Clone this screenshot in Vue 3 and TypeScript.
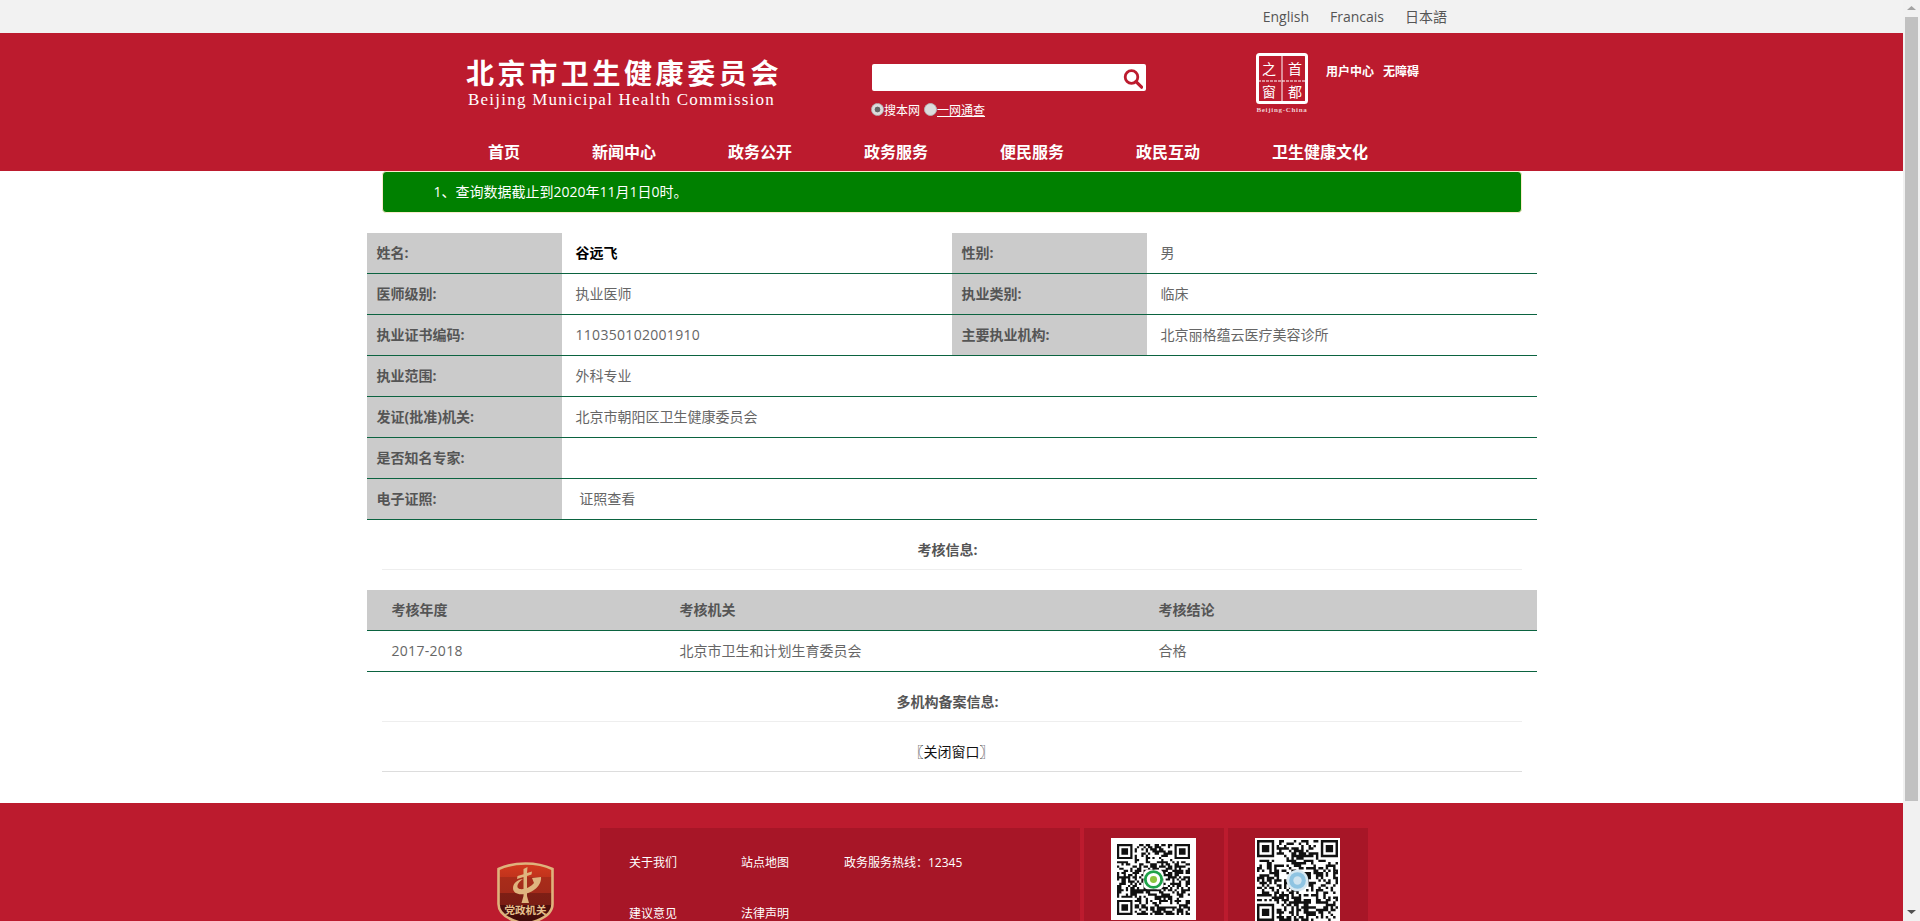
<template>
  <div class="window">
    <div class="page">
      <div class="topbar">
        <a v-for="lang in langs" :key="lang" class="lang">{{ lang }}</a>
      </div>

      <header class="header">
        <div class="head-main">
          <div class="brand">
            <div class="brand-cn">北京市卫生健康委员会</div>
            <div class="brand-en">Beijing Municipal Health Commission</div>
          </div>
          <div class="search-box">
            <div class="search">
              <svg class="search-icon" viewBox="0 0 20 20" width="20" height="20">
                <circle cx="8.5" cy="8" r="6.3" fill="none" stroke="#bc1b2e" stroke-width="2.8" />
                <path d="M13 12.6 L18.6 18.2" stroke="#bc1b2e" stroke-width="3.2" stroke-linecap="round" />
              </svg>
            </div>
            <div class="scope">
              <input class="radio" type="radio" name="scope" checked />
              <span>搜本网</span>
              <input class="radio second" type="radio" name="scope" />
              <a class="scope-link">一网通查</a>
            </div>
          </div>
          <div class="capital">
            <svg viewBox="0 0 58 61" width="58" height="61">
              <rect x="2.5" y="1.5" width="49" height="48" rx="2" fill="none" stroke="#fff" stroke-width="3" />
              <path d="M27 2 V49" stroke="#fff" stroke-width="1" />
              <path d="M3 28 H51" stroke="#fff" stroke-width="1.2" stroke-dasharray="3 1" />
              <text x="14" y="21" class="cap-char">之</text>
              <text x="40" y="21" class="cap-char">首</text>
              <text x="14" y="44" class="cap-char">窗</text>
              <text x="40" y="44" class="cap-char">都</text>
              <text x="27" y="59" class="cap-en">Beijing-China</text>
            </svg>
          </div>
          <div class="user-links">
            <a>用户中心</a>
            <a>无障碍</a>
          </div>
        </div>
        <nav class="nav">
          <a v-for="item in navItems" :key="item" class="nav-item">{{ item }}</a>
        </nav>
      </header>

      <main class="container">
        <div class="notice">1、查询数据截止到2020年11月1日0时。</div>

        <table class="info">
          <colgroup>
            <col class="c-label" />
            <col class="c-value" />
            <col class="c-label" />
            <col class="c-value" />
          </colgroup>
          <tbody>
            <tr v-for="row in infoRows" :key="row.label">
              <th>{{ row.label }}</th>
              <td :colspan="row.label2 ? 1 : 3" :class="{ strong: row.strong, num: row.num }">{{ row.value }}</td>
              <template v-if="row.label2">
                <th>{{ row.label2 }}</th>
                <td>{{ row.value2 }}</td>
              </template>
            </tr>
          </tbody>
        </table>

        <div class="section gap">考核信息:</div>

        <table class="review">
          <colgroup>
            <col class="r-1" />
            <col class="r-2" />
            <col class="r-3" />
          </colgroup>
          <thead>
            <tr>
              <th>考核年度</th>
              <th>考核机关</th>
              <th>考核结论</th>
            </tr>
          </thead>
          <tbody>
            <tr>
              <td class="num">2017-2018</td>
              <td>北京市卫生和计划生育委员会</td>
              <td>合格</td>
            </tr>
          </tbody>
        </table>

        <div class="section">多机构备案信息:</div>
        <div class="section close"><a>〖关闭窗口〗</a></div>
      </main>

      <footer class="footer">
        <div class="badge">
          <svg viewBox="0 0 57 63" width="57" height="63">
            <defs>
              <linearGradient id="shieldFill" x1="0" y1="0" x2="0" y2="1">
                <stop offset="0" stop-color="#d33a1f" />
                <stop offset="0.22" stop-color="#c2331c" />
                <stop offset="0.23" stop-color="#a92c1a" />
                <stop offset="0.48" stop-color="#a32a1a" />
                <stop offset="0.49" stop-color="#7e1f15" />
                <stop offset="0.68" stop-color="#7a1d14" />
                <stop offset="0.69" stop-color="#4f0f0d" />
                <stop offset="1" stop-color="#3d0a09" />
              </linearGradient>
            </defs>
            <path d="M1.5 7 C10 3 19 1.5 28.5 1.5 C38 1.5 47 3 55.5 7 V42 C55.5 53 42 59 28.5 62 C15 59 1.5 53 1.5 42 Z" fill="url(#shieldFill)" stroke="#dfb27c" stroke-width="2.6" />
            <g fill="#dfb47e">
              <path d="M26.5 7 L30.5 5 L30 11 L35 9.5 L34.5 12.5 L30 14 V34 L32 41 H24.5 L26.5 34 V15 L20 17 L20.5 14 L26.5 12.2 Z" />
              <path d="M16 26 C16 20 23 17 26 17 C21 20 19.5 24 21 26 C24 29 33 26 37 21 L35 16 L44 15 C45 23 36 31 27 32 C21 33 16 31 16 26 Z" />
            </g>
            <text x="28.5" y="52" class="badge-text">党政机关</text>
          </svg>
        </div>
        <div class="foot-links">
          <a>关于我们</a>
          <a>站点地图</a>
          <a>政务服务热线&#xFF1A;12345</a>
          <a>建议意见</a>
          <a>法律声明</a>
        </div>
        <div class="qr-panel">
          <div class="qr qr-one">
            <svg viewBox="0 0 33 33" width="73" height="71" preserveAspectRatio="none">
              <path :d="qrOne" fill="#111" />
              <rect x="12" y="12" width="9" height="9" rx="2" fill="#fff" />
              <circle cx="16.5" cy="16.5" r="3.7" fill="#fff" stroke="#1fa24a" stroke-width="1.3" />
              <circle cx="16.5" cy="16.5" r="1.6" fill="#8cc63f" />
            </svg>
          </div>
        </div>
        <div class="qr-panel">
          <div class="qr qr-two">
            <svg viewBox="0 0 33 33" width="81" height="81">
              <path :d="qrTwo" fill="#111" />
              <circle cx="16.5" cy="16.5" r="4.4" fill="#d8e9f2" />
              <circle cx="16.5" cy="16.5" r="3.4" fill="#8fc4e2" />
              <circle cx="16.5" cy="16.5" r="1.7" fill="#cfe3ef" />
            </svg>
          </div>
        </div>
      </footer>
    </div>

    <div class="scrollbar">
      <svg class="arrow" viewBox="0 0 17 17" width="17" height="17">
        <path d="M8.5 6 L13 10 H4 Z" fill="#a3a3a3" />
      </svg>
      <div class="thumb"></div>
      <svg class="arrow end" viewBox="0 0 17 17" width="17" height="17">
        <path d="M4 7 H13 L8.5 11 Z" fill="#505050" />
      </svg>
    </div>
  </div>
</template>

<script setup lang="ts">
type InfoRow = {
  label: string;
  value: string;
  label2?: string;
  value2?: string;
  strong?: boolean;
  num?: boolean;
};

const langs = ["English", "Francais", "日本語"];

const navItems = ["首页", "新闻中心", "政务公开", "政务服务", "便民服务", "政民互动", "卫生健康文化"];

const infoRows: InfoRow[] = [
  { label: "姓名:", value: "谷远飞", label2: "性别:", value2: "男", strong: true },
  { label: "医师级别:", value: "执业医师", label2: "执业类别:", value2: "临床" },
  { label: "执业证书编码:", value: "110350102001910", label2: "主要执业机构:", value2: "北京丽格蕴云医疗美容诊所", num: true },
  { label: "执业范围:", value: "外科专业" },
  { label: "发证(批准)机关:", value: "北京市朝阳区卫生健康委员会" },
  { label: "是否知名专家:", value: "" },
  { label: "电子证照:", value: "\u00a0证照查看" },
];

// fake but stable QR pattern, only has to look right
const qrPath = (seed: number): string => {
  const size = 33;
  let state = seed;
  const next = () => {
    state = (state * 1103515245 + 12345) & 0x7fffffff;
    return (state >> 16) & 1;
  };
  const inFinder = (x: number, y: number) =>
    (x < 8 && y < 8) || (x >= size - 8 && y < 8) || (x < 8 && y >= size - 8);
  let d = "";
  for (let y = 0; y < size; y++) {
    for (let x = 0; x < size; x++) {
      if (!inFinder(x, y) && next()) d += `M${x} ${y}h1v1h-1z`;
    }
  }
  for (const [fx, fy] of [[0, 0], [size - 7, 0], [0, size - 7]]) {
    d += `M${fx} ${fy}h7v7h-7zM${fx + 1} ${fy + 1}v5h5v-5zM${fx + 2} ${fy + 2}h3v3h-3z`;
  }
  return d;
};

const qrOne = qrPath(20201);
const qrTwo = qrPath(77123);
</script>

<style scoped>
.window {
  display: flex;
  height: 921px;
  overflow: hidden;
}

.page {
  flex: 0 0 1903px;
  width: 1903px;
  background: #fff;
  font-family: "Open Sans", "Noto Sans CJK SC", sans-serif;
  font-size: 14px;
  line-height: 20px;
  color: #666;
}

.scrollbar {
  display: flex;
  flex-direction: column;
  flex: 0 0 17px;
  background: #f1f1f1;
}

.arrow {
  display: block;
  flex: none;
}

.arrow.end {
  margin-top: auto;
  margin-bottom: 1px;
}

.thumb {
  flex: none;
  height: 784px;
  margin: 0 2px;
  background: #c1c1c1;
}

.topbar {
  display: flex;
  justify-content: flex-end;
  align-items: center;
  gap: 21px;
  height: 33px;
  padding-right: 456px;
  background: #f2f2f2;
  color: #555;
}

.header {
  height: 138px;
  background: #bc1b2e;
  color: #fff;
}

.head-main {
  display: flex;
  height: 99px;
  padding-left: 466px;
}

.brand {
  width: 406px;
  padding-top: 25px;
}

.brand-cn {
  font-size: 28px;
  line-height: 28px;
  font-weight: 700;
  letter-spacing: 3.6px;
  font-family: "Noto Sans CJK SC", sans-serif;
}

.brand-en {
  margin: 4px 0 0 2px;
  font-family: "Liberation Serif", serif;
  font-size: 17px;
  line-height: 20px;
  letter-spacing: 1.23px;
  white-space: nowrap;
}

.search-box {
  width: 274px;
  padding-top: 31px;
}

.search {
  position: relative;
  height: 27px;
  background: #fff;
  border-radius: 2px;
}

.search-icon {
  position: absolute;
  top: 5px;
  right: 3px;
}

.scope {
  display: flex;
  align-items: center;
  margin: 10px 0 0 -1px;
  height: 20px;
  font-size: 12px;
  color: #fff;
}

.radio {
  appearance: none;
  box-sizing: border-box;
  width: 13px;
  height: 13px;
  margin: -4px 0 0 0;
  border-radius: 50%;
  background: #dcdcdc;
  border: 1px solid #b5b5b5;
}

.radio:checked {
  background: radial-gradient(circle, #666 0 2.6px, #dcdcdc 3.2px);
}

.radio.second {
  margin-left: 4px;
}

.scope-link {
  text-decoration: underline;
}

.capital {
  width: 58px;
  margin: 20px 0 0 109px;
}

.cap-char {
  fill: #fff;
  font-size: 14px;
  text-anchor: middle;
  font-family: "Noto Sans CJK SC", sans-serif;
}

.cap-en {
  fill: #f0d0d4;
  font-family: "Liberation Serif", serif;
  font-size: 7px;
  font-weight: 700;
  letter-spacing: 0.7px;
  text-anchor: middle;
}

.user-links {
  display: flex;
  gap: 9px;
  margin: 29px 0 0 13px;
  font-size: 12px;
  font-weight: 700;
}

.nav {
  display: flex;
  padding-left: 452px;
}

.nav-item {
  padding: 0 36px;
  font-size: 16px;
  line-height: 41px;
  font-weight: 700;
}

.container {
  width: 1170px;
  margin: 0 auto;
  padding-bottom: 31px;
}

.notice {
  margin: 0 15px 20px;
  padding: 10px 0 10px 51px;
  background: #008000;
  border: 1px solid #faebcc;
  border-radius: 4px;
  color: #fff;
}

table {
  width: 1170px;
  table-layout: fixed;
  border-collapse: separate;
  border-spacing: 0;
}

.c-label {
  width: 195px;
}

.c-value {
  width: 390px;
}

.r-1 {
  width: 288px;
}

.r-2 {
  width: 479px;
}

.info th,
.info td,
.review th,
.review td {
  height: 20px;
  padding: 10px 0;
  border-bottom: 1px solid #0b6340;
  text-align: left;
}

.info th {
  padding-left: 10px;
  background: #cbcbcb;
  color: #555;
  font-weight: 700;
}

.info td {
  padding-left: 14px;
}

.info td.strong {
  color: #000;
  font-weight: 700;
}

.review th {
  padding-left: 25px;
  background: #cbcbcb;
  color: #555;
}

.review td {
  padding-left: 25px;
}

td.num {
  letter-spacing: 0.3px;
}

.section {
  margin: 0 15px;
  padding: 20px 8px 9px 0;
  border-bottom: 1px solid #eee;
  text-align: center;
  color: #555;
  font-weight: 700;
}

.section.gap {
  margin-bottom: 20px;
}

.section.close {
  padding-right: 0;
  border-bottom-color: #ddd;
  color: #111;
  font-weight: 400;
}

.footer {
  display: flex;
  gap: 4px;
  height: 239px;
  padding: 25px 0 0 600px;
  box-sizing: border-box;
  background: #bc1b2e;
  position: relative;
  color: #fff;
  font-size: 12px;
}

.badge {
  position: absolute;
  left: 497px;
  top: 59px;
}

.badge-text {
  fill: #e6c08e;
  font-size: 10.5px;
  font-weight: 700;
  text-anchor: middle;
  font-family: "Noto Sans CJK SC", sans-serif;
}

.foot-links {
  display: grid;
  grid-template-columns: 112px 103px 1fr;
  grid-auto-rows: 51px;
  align-content: start;
  align-items: center;
  width: 480px;
  height: 180px;
  padding: 9px 0 0 29px;
  box-sizing: border-box;
  background: #a71627;
}

.foot-links a:nth-child(4) {
  grid-column: 1;
}

.qr-panel {
  width: 140px;
  height: 180px;
  padding: 10px 0 0 27px;
  box-sizing: border-box;
  background: #a71627;
}

.qr {
  width: 85px;
  height: 82px;
  box-sizing: border-box;
  background: #fff;
}

.qr svg {
  display: block;
  filter: blur(0.45px);
}

.qr-one {
  padding: 6px;
}

.qr-two {
  height: 85px;
  padding: 2px;
}
</style>

<style>
html,
body {
  margin: 0;
  overflow: hidden;
}
</style>
